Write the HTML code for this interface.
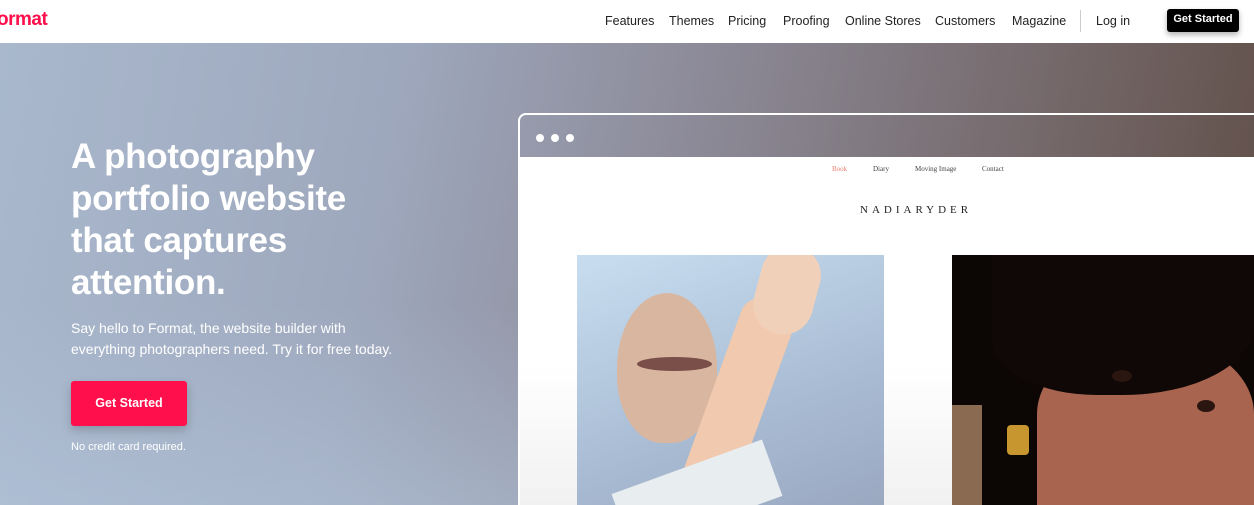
<!DOCTYPE html>
<html><head><meta charset="utf-8"><style>
*{margin:0;padding:0;box-sizing:border-box}
html,body{width:1254px;height:505px;overflow:hidden}
body{font-family:"Liberation Sans",sans-serif;position:relative;background:#fff}
.nav{position:absolute;top:0;left:0;width:1254px;height:43px;background:#fff}
.logo{position:absolute;left:-3px;top:9px;color:#ff0f4b;font-weight:bold;font-size:19px;letter-spacing:-0.5px}
.links{position:absolute;top:14px;font-size:12.5px;color:#222}
.links span{position:absolute;white-space:nowrap}
.sep{position:absolute;left:1080px;top:10px;width:1px;height:22px;background:#ccc}
.gs{position:absolute;left:1167px;top:9px;width:72px;height:23px;background:#000;color:#fff;font-size:11px;font-weight:bold;border-radius:3px;text-align:center;line-height:21px;box-shadow:0 3px 6px rgba(0,0,0,.3)}
.hero{position:absolute;top:43px;left:0;width:1254px;height:462px;overflow:hidden;background:linear-gradient(100deg,#a9b8cd 0%,#9ea8bd 30%,#8b8895 55%,#6f6160 85%,#5f4d46 100%)}
.hero:after{content:"";position:absolute;left:0;bottom:0;width:520px;height:200px;background:linear-gradient(0deg,rgba(180,198,220,.5),rgba(180,198,220,0))}
h1{position:absolute;left:71px;top:93px;color:#fff;font-size:35px;line-height:42px;font-weight:bold;width:300px;z-index:2;letter-spacing:-0.3px}
.sub{position:absolute;left:71px;top:275px;color:#fff;font-size:14px;line-height:21px;z-index:2}
.btn{position:absolute;left:71px;top:338px;width:116px;height:45px;background:#ff0f4b;color:#fff;font-size:12.5px;font-weight:bold;text-align:center;line-height:45px;border-radius:3px;z-index:2;box-shadow:0 4px 10px rgba(0,0,0,.2)}
.nc{position:absolute;left:71px;top:398px;color:#fff;font-size:11px;z-index:2}
.win{position:absolute;left:518px;top:70px;width:736px;height:392px;border:2px solid #fff;border-right:none;border-bottom:none;border-radius:8px 0 0 0;z-index:2}
.dot{position:absolute;top:19px;width:8px;height:8px;border-radius:50%;background:#fff}
.page{position:absolute;left:520px;top:157px;width:734px;height:348px;overflow:hidden;background:linear-gradient(180deg,#fff 60%,#f1f1f1);z-index:2}
.pn{position:absolute;top:8px;font-family:"Liberation Serif",serif;font-size:7px;color:#444}
.title{position:absolute;left:340px;top:47px;font-family:"Liberation Serif",serif;font-size:11px;letter-spacing:4px;color:#222}
.p1{position:absolute;left:57px;top:98px;width:307px;height:250px;overflow:hidden;background:linear-gradient(160deg,#c8def0,#a9bcd4 60%,#9aa8c0)}
.p2{position:absolute;left:432px;top:98px;width:302px;height:250px;overflow:hidden;background:#0c0605}
.sh{position:absolute}
</style></head><body>
<div class="nav">
<div class="logo">ormat</div>
<div class="links">
<span style="left:605px">Features</span>
<span style="left:669px">Themes</span>
<span style="left:728px">Pricing</span>
<span style="left:783px">Proofing</span>
<span style="left:845px">Online Stores</span>
<span style="left:935px">Customers</span>
<span style="left:1012px">Magazine</span>
<span style="left:1096px">Log in</span>
</div>
<div class="sep"></div>
<div class="gs">Get Started</div>
</div>
<div class="hero">
<h1>A photography portfolio website that captures attention.</h1>
<div class="sub">Say hello to Format, the website builder with<br>everything photographers need. Try it for free today.</div>
<div class="btn">Get Started</div>
<div class="nc">No credit card required.</div>
<div class="win"><div class="dot" style="left:16px"></div><div class="dot" style="left:31px"></div><div class="dot" style="left:46px"></div></div>
</div>
<div class="page">
<span class="pn" style="left:312px;color:#e98070">Book</span>
<span class="pn" style="left:353px">Diary</span>
<span class="pn" style="left:395px">Moving Image</span>
<span class="pn" style="left:462px">Contact</span>
<div class="title">NADIARYDER</div>
<div class="p1">
<div class="sh" style="left:40px;top:38px;width:100px;height:150px;border-radius:50% 50% 45% 45%;background:#d9b6a0"></div>
<div class="sh" style="left:60px;top:102px;width:75px;height:14px;border-radius:50%;background:#7a4f4a"></div>
<div class="sh" style="left:130px;top:40px;width:55px;height:230px;background:#f0c9ae;transform:rotate(20deg);border-radius:20px"></div>
<div class="sh" style="left:180px;top:-10px;width:60px;height:90px;background:#f0d0b8;border-radius:30px;transform:rotate(15deg)"></div>
<div class="sh" style="left:40px;top:210px;width:160px;height:60px;background:#e8eef0;transform:rotate(-20deg)"></div>
</div>
<div class="p2">
<div class="sh" style="left:0;top:150px;width:30px;height:100px;background:#8a6a50"></div>
<div class="sh" style="left:85px;top:85px;width:217px;height:165px;border-radius:45% 45% 0 0;background:#a8644f"></div>
<div class="sh" style="left:40px;top:0;width:262px;height:140px;border-radius:0 0 50% 40%;background:#0f0806"></div>
<div class="sh" style="left:160px;top:115px;width:20px;height:12px;border-radius:50%;background:#2a1510"></div>
<div class="sh" style="left:245px;top:145px;width:18px;height:12px;border-radius:50%;background:#2a1510"></div>
<div class="sh" style="left:55px;top:170px;width:22px;height:30px;border-radius:4px;background:#c8962e"></div>
</div>
</div>
</body></html>
